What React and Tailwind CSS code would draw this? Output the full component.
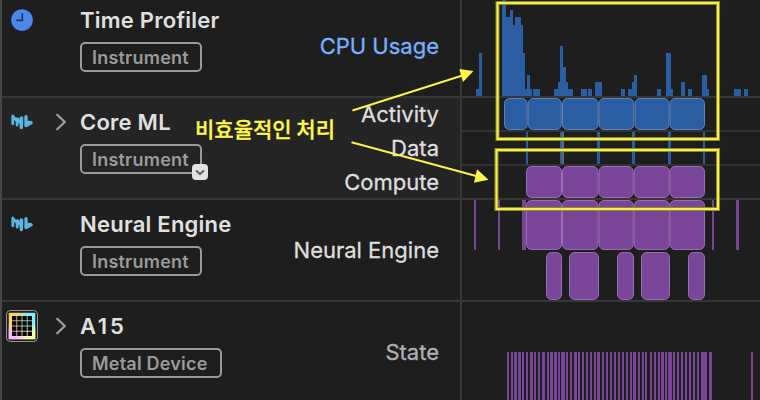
const CPU = [
  [476, 3, 89], [479, 3, 53], [502, 4, 0], [506, 4, 17], [510, 3, 10], [513, 2, 25], [515, 6, 17],
  [521, 2, 25], [523, 2, 53], [525, 2, 89], [527, 3, 75], [530, 2, 89], [533, 7, 89], [554, 4, 89],
  [558, 2, 82], [560, 3, 46], [563, 3, 67], [566, 2, 82], [568, 5, 89], [581, 6, 89], [588, 4, 89],
  [595, 7, 82], [621, 4, 89], [628, 4, 89], [632, 2, 82], [634, 3, 75], [657, 4, 89], [666, 5, 53],
  [671, 2, 89], [681, 4, 82], [688, 4, 89], [702, 5, 75], [707, 2, 89], [734, 7, 89], [744, 4, 89],
];
const ACTIVITY = [[504, 23.7], [527.7, 34], [562, 36.5], [598.5, 35.8], [634.5, 35], [669.5, 35.5]];
const DATA = [[526, 2], [560, 2], [597, 3], [632, 3], [668, 3], [703, 2]];
const COMPUTE = [[526, 36], [562, 36.5], [598.5, 35.2], [633.7, 36], [669.5, 35.5]];
const NEURAL_LINES = [[474, 2], [498, 2], [522, 4], [712, 2], [736, 3]];
const NEURAL_LOWER = [[546, 16], [569, 30], [617, 17], [641, 29], [688, 17]];
const STATE = [
  [507, 2], [511, 2], [514, 3], [518, 3], [522, 2], [526, 2], [530, 3], [534, 2], [538, 2], [542, 3],
  [547, 2], [550, 3], [554, 3], [558, 2], [561, 4], [566, 2], [570, 2], [574, 3], [578, 2], [582, 2],
  [586, 2], [590, 2], [594, 2], [597, 3], [602, 2], [606, 2], [610, 2], [614, 2], [618, 2], [622, 2],
  [626, 2], [630, 2], [633, 3], [638, 2], [642, 2], [645, 2], [650, 2], [654, 2], [658, 2], [661, 3],
  [665, 2], [668, 4], [673, 2], [677, 2], [681, 2], [685, 2], [689, 2], [693, 2], [697, 2], [701, 6],
  [709, 3], [751, 2],
];

// Charts share the timeline's x coordinates: the plot area spans 462..760.
function Plot({ height, children }) {
  return (
    <svg className="block shrink-0" width="298" height={height} viewBox={`462 0 298 ${height}`}>
      {children}
    </svg>
  );
}

function Bars({ data, y, height, fill }) {
  return data.map(([x, w]) => <rect key={x} x={x} y={y} width={w} height={height} fill={fill} />);
}

function Blocks({ data, y, height, fill, stroke }) {
  return data.map(([x, w]) => (
    <rect key={x} x={x + 0.5} y={y + 0.5} width={w - 1} height={height - 1} rx="5" fill={fill} stroke={stroke} />
  ));
}

const BLUE = "#2b5da3";
const PURPLE = "#784599";

function ClockIcon() {
  return (
    <svg width="22" height="22" viewBox="0 0 22 22">
      <circle cx="11" cy="11" r="10.8" fill="#4b88ec" />
      <path d="M11.3 4.2V11.3H5.2" fill="none" stroke="#263a5c" strokeWidth="1.7" />
    </svg>
  );
}

function MLIcon() {
  return (
    <svg width="22" height="18" viewBox="0 0 22 18" fill="none" stroke="#5bb5e0" strokeLinecap="round" strokeLinejoin="round">
      <path d="M1.8 10.8V3L6.6 9V5.8" strokeWidth="2.8" />
      <path d="M6.2 6V12.2M7.2 6.5L10.2 11" strokeWidth="2.8" />
      <path d="M10.3 5V14.6" strokeWidth="3.4" />
      <path d="M15 3.8V12.6L20 9.8L16 9.2" strokeWidth="3.4" />
      <path d="M3.9 8.2V11.5M8.2 11V13M12.7 4V11.5" stroke="#2f6480" strokeWidth="0.6" />
    </svg>
  );
}

function MetalIcon() {
  const cells = [0, 1, 2, 3];
  return (
    <svg width="32" height="32" viewBox="0 0 32 32">
      <defs>
        <linearGradient id="metalTop"><stop offset="0.25" stopColor="#ffd166" /><stop offset="0.75" stopColor="#83effc" /></linearGradient>
        <linearGradient id="metalBottom"><stop offset="0.25" stopColor="#f7b9ff" /><stop offset="0.75" stopColor="#fbffa9" /></linearGradient>
        <linearGradient id="metalFade" x2="0" y2="1"><stop offset="0.4" stopColor="#000" /><stop offset="0.7" stopColor="#fff" /></linearGradient>
        <mask id="metalMask"><rect width="32" height="32" fill="url(#metalFade)" /></mask>
      </defs>
      <rect x="0.6" y="0.6" width="30.8" height="30.8" rx="3.5" fill="#111" stroke="#a2a2a2" />
      <rect x="2.7" y="2.7" width="26.6" height="26.6" rx="0.6" fill="url(#metalTop)" />
      <rect x="2.7" y="2.7" width="26.6" height="26.6" rx="0.6" fill="url(#metalBottom)" mask="url(#metalMask)" />
      {cells.map((r) => cells.map((c) => (
        <rect key={`${r}-${c}`} x={6 + c * 5.2} y={6 + r * 5.2} width="4.4" height="4.4" fill="#070707" />
      )))}
    </svg>
  );
}

function Chevron() {
  return (
    <svg width="12" height="18" viewBox="0 0 12 18">
      <path d="M2.2 1.8L9.8 9L2.2 16.2" fill="none" stroke="#a0a0a0" strokeWidth="2.2" strokeLinecap="round" strokeLinejoin="round" />
    </svg>
  );
}

function Row({ icon, expandable, title, titleClass = "tracking-[0.24px]", tag, tagWidth, menu, labels, labelClass, rowClass, children }) {
  return (
    <section className="flex h-[102px] shrink-0 border-b-2 border-[#373737]">
      <div className={`flex w-[458px] shrink-0 ${rowClass}`}>
        <div className="flex h-12 w-10 shrink-0 items-center justify-center">{icon}</div>
        <div className="flex h-12 w-[38px] shrink-0 items-center pl-[13px]">{expandable && <Chevron />}</div>
        <div className="flex w-[160px] shrink-0 flex-col items-start">
          <h2 className={`flex h-[46px] items-center whitespace-nowrap pt-[2px] text-[22px] font-semibold text-[#e0e0e0] ${titleClass}`}>{title}</h2>
          <div className={`relative flex h-[30px] items-center whitespace-nowrap rounded-[5px] border-2 border-[#9a9a9a] pl-[10px] text-[18px] font-semibold tracking-[0.22px] text-[#9a9a9a] ${tagWidth}`}>
            {tag}
            {menu && (
              <span className="absolute -bottom-2 -right-2 flex size-4 items-center justify-center rounded-[4px] bg-[#e4e4e4]">
                <svg width="10" height="7" viewBox="0 0 10 7"><path d="M1 1.5L5 5L9 1.5" fill="none" stroke="#666" strokeWidth="2.2" /></svg>
              </span>
            )}
          </div>
        </div>
        <div className={`flex flex-1 flex-col pr-[21px] text-right text-[22px] [-webkit-text-stroke:0.3px_currentColor] ${labelClass}`}>
          {labels.map((label) => (
            <div key={label} className="flex flex-1 items-center justify-end whitespace-nowrap">{label}</div>
          ))}
        </div>
      </div>
      <div className="w-[2px] shrink-0 bg-[#373737]" />
      <div className="flex w-[298px] shrink-0 flex-col">{children}</div>
    </section>
  );
}

function Annotations() {
  return (
    <div className="pointer-events-none absolute inset-0">
      <svg className="absolute inset-0" width="760" height="400" fill="none">
        {[["#8d8b2b", 4], ["#f5ef4b", 2]].map(([stroke, w]) => (
          <g key={stroke} stroke={stroke} strokeWidth={w}>
            <rect x="497.5" y="3" width="220.5" height="136" />
            <rect x="496.5" y="150" width="221.5" height="59" />
          </g>
        ))}
        <path d="M352.5 110.5L464 75M351.5 142.3L478 176.5" stroke="#fcf151" strokeWidth="2" />
        <path d="M473.5 71L459.3 69L463 82ZM488.5 179.7L477 169.3L474 182.7Z" fill="#fff34c" />
      </svg>
      <p className="absolute left-[195px] top-[113px] whitespace-nowrap font-['Noto_Sans_CJK_KR',sans-serif] text-[21px] font-medium leading-[30px] text-[#fff74d] [-webkit-text-stroke:0.3px_#fff74d]">비효율적인 처리</p>
    </div>
  );
}

export default function App() {
  return (
    <main className="relative h-[400px] w-[760px] overflow-hidden border-l-2 border-[#464646] bg-[#1e1e1e] font-['Inter',sans-serif]">
      <div className="-mt-1 flex flex-col">
        <Row icon={<ClockIcon />} title="Time Profiler" tag="Instrument" tagWidth="w-[122px]" labels={["CPU Usage"]} labelClass="text-[#78b0ff]" rowClass="bg-[#1e1e1e]">
          <div className="h-1" />
          <Plot height={96}>
            {CPU.map(([x, w, top]) => <rect key={x} x={x} y={top} width={w} height={96 - top} fill={BLUE} />)}
          </Plot>
        </Row>
        <Row icon={<MLIcon />} expandable menu title="Core ML" tag="Instrument" tagWidth="w-[122px]" labels={["Activity", "Data", "Compute"]} labelClass="-mt-px -mb-px text-[#dedede]" rowClass="bg-[#242424]">
          <div className="h-[34px] border-b-2 border-[#323232]">
            <Plot height={32}><Blocks data={ACTIVITY} y={0} height={32} fill={BLUE} stroke="#5c83bb" /></Plot>
          </div>
          <div className="h-[34px] border-b-2 border-[#323232]">
            <Plot height={32}>
              <Bars data={DATA} y={0} height={32} fill={BLUE} />
              <rect x="562" y="0" width="2" height="32" fill="#67676b" />
            </Plot>
          </div>
          <Plot height={32}><Blocks data={COMPUTE} y={0} height={32} fill={PURPLE} stroke="#986fb2" /></Plot>
        </Row>
        <Row icon={<MLIcon />} title="Neural Engine" tag="Instrument" tagWidth="w-[122px]" labels={["Neural Engine"]} labelClass="text-[#dedede]" rowClass="bg-[#1e1e1e]">
          <Plot height={100}>
            <Bars data={NEURAL_LINES} y={0} height={50} fill={PURPLE} />
            <Blocks data={COMPUTE} y={0} height={50} fill={PURPLE} stroke="#986fb2" />
            <Blocks data={NEURAL_LOWER} y={52} height={48} fill={PURPLE} stroke="#986fb2" />
          </Plot>
        </Row>
        <Row icon={<MetalIcon />} expandable title="A15" titleClass="tracking-[2.8px]" tag="Metal Device" tagWidth="w-[142px]" labels={["State"]} labelClass="text-[#b0b0b2]" rowClass="bg-[#1e1e1e]">
          <Plot height={100}><Bars data={STATE} y={50} height={50} fill={PURPLE} /></Plot>
        </Row>
      </div>
      <div className="absolute inset-y-0 -left-[2px] w-[760px]"><Annotations /></div>
    </main>
  );
}
